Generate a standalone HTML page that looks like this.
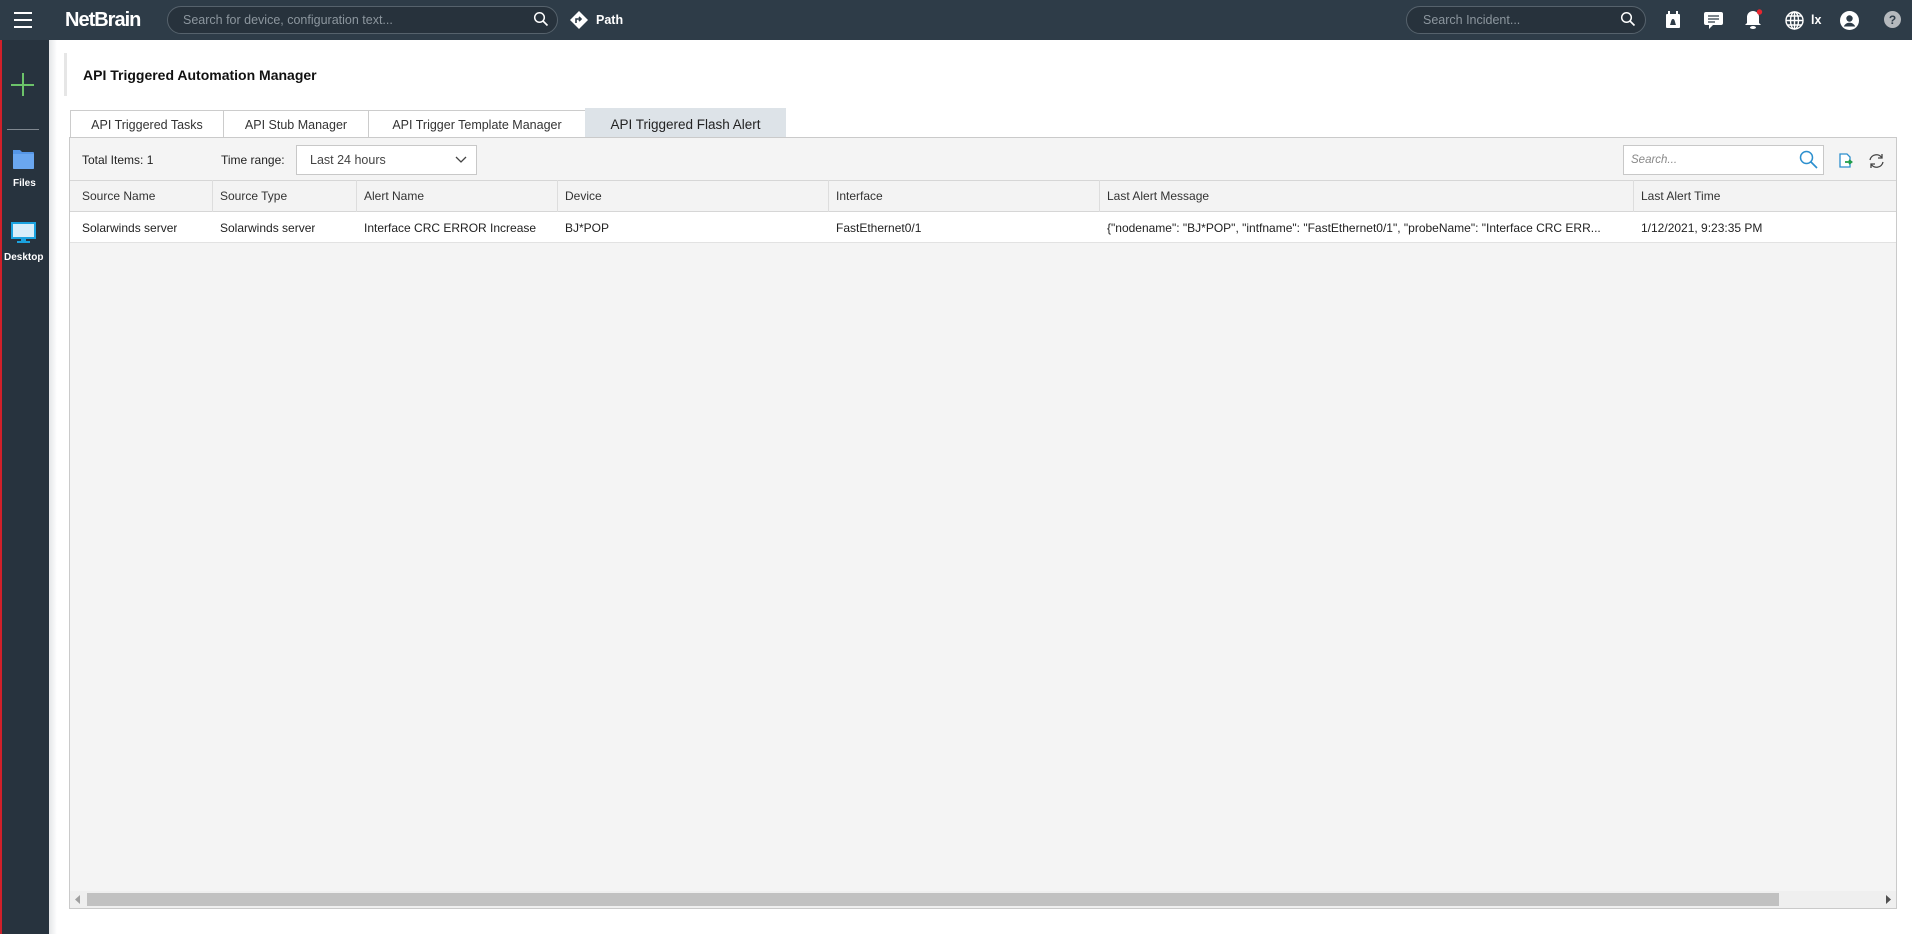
<!DOCTYPE html>
<html><head><meta charset="utf-8"><style>
*{box-sizing:border-box;margin:0;padding:0}
body{width:1912px;height:934px;overflow:hidden;background:#fff;font-family:"Liberation Sans",sans-serif;font-size:12px;color:#222;position:relative}
.abs{position:absolute}
#top{left:0;top:0;width:1912px;height:40px;background:#2e3c48}
#side{left:0;top:40px;width:49px;height:894px;background:#27333e;border-left:2px solid #d0202a}
.txt{white-space:nowrap}
.tab{top:110px;height:28px;border:1px solid #ccc;border-bottom:none;background:#fff;color:#333;font-size:12.5px;text-align:center;line-height:29px}
.hd{top:180px;height:32px;line-height:33px;padding-left:12px;border-right:1px solid #ddd;font-size:12px;color:#333}
.cell{top:212px;height:31px;line-height:33px;padding-left:12px;font-size:12px;color:#222;white-space:nowrap;overflow:hidden}
</style></head><body>
<div id="top" class="abs"></div>
<div class="abs" style="left:14px;top:12px;width:18px;height:2px;background:#fff"></div>
<div class="abs" style="left:14px;top:19px;width:18px;height:2px;background:#fff"></div>
<div class="abs" style="left:14px;top:26px;width:18px;height:2px;background:#fff"></div>
<div class="abs txt" style="left:65px;top:9px;color:#fff;font-size:20px;font-weight:bold;letter-spacing:-1px">NetBrain</div>
<div class="abs" style="left:167px;top:6px;width:391px;height:28px;border:1px solid #56626c;border-radius:14px;background:#27323c"></div>
<div class="abs txt" style="left:183px;top:13px;color:#8c969e;font-size:12.5px">Search for device, configuration text...</div>
<svg class="abs" style="left:533px;top:11px" width="16" height="16" viewBox="0 0 16 16"><circle cx="6.5" cy="6.5" r="4.8" fill="none" stroke="#fff" stroke-width="1.5"/><path d="M10 10l4.5 4.5" stroke="#fff" stroke-width="1.6"/></svg>
<svg class="abs" style="left:570px;top:11px" width="18" height="18" viewBox="0 0 18 18"><path d="M9 0L18 9 9 18 0 9z" fill="#fff"/><path d="M6 12V8h5M9 6l2 2-2 2" stroke="#2e3c48" stroke-width="1.6" fill="none"/></svg>
<div class="abs txt" style="left:596px;top:13px;color:#fff;font-size:12.5px;font-weight:bold">Path</div>
<div class="abs" style="left:1406px;top:6px;width:240px;height:28px;border:1px solid #56626c;border-radius:14px;background:#27323c"></div>
<div class="abs txt" style="left:1423px;top:13px;color:#8c969e;font-size:12.5px">Search Incident...</div>
<svg class="abs" style="left:1620px;top:11px" width="16" height="16" viewBox="0 0 16 16"><circle cx="6.5" cy="6.5" r="4.8" fill="none" stroke="#fff" stroke-width="1.5"/><path d="M10 10l4.5 4.5" stroke="#fff" stroke-width="1.6"/></svg>
<svg class="abs" style="left:1665px;top:11px" width="16" height="18" viewBox="0 0 16 18"><rect x="1" y="3" width="14" height="14" rx="1" fill="#fff"/><rect x="3" y="0" width="2" height="4" fill="#fff"/><rect x="11" y="0" width="2" height="4" fill="#fff"/><path d="M5 14c1-2 1-6 3-6s2 4 3 6z" fill="#2e3c48"/></svg>
<svg class="abs" style="left:1704px;top:11px" width="19" height="19" viewBox="0 0 19 19"><path d="M2 1h15a2 2 0 012 2v9a2 2 0 01-2 2H9l-4 4v-4H2a2 2 0 01-2-2V3a2 2 0 012-2z" fill="#fff"/><path d="M4 5h11M4 8h11M4 11h7" stroke="#2e3c48" stroke-width="1.3"/></svg>
<svg class="abs" style="left:1744px;top:9px" width="20" height="21" viewBox="0 0 20 21"><path d="M9 2a6 6 0 016 6v6l2 2H1l2-2V8a6 6 0 016-6z" fill="#fff"/><ellipse cx="9" cy="18.5" rx="3" ry="1.5" fill="#fff"/><circle cx="15.5" cy="3" r="2.7" fill="#e8262f"/></svg>
<svg class="abs" style="left:1785px;top:11px" width="19" height="19" viewBox="0 0 19 19" fill="none" stroke="#fff" stroke-width="1.4"><circle cx="9.5" cy="9.5" r="8.5"/><ellipse cx="9.5" cy="9.5" rx="4" ry="8.5"/><path d="M9.5 1v17M1 9.5h17M2.5 5h14M2.5 14h14"/></svg>
<div class="abs txt" style="left:1811px;top:13px;color:#fff;font-size:12.5px;font-weight:bold">lx</div>
<svg class="abs" style="left:1840px;top:11px" width="19" height="19" viewBox="0 0 19 19"><circle cx="9.5" cy="9.5" r="9.5" fill="#fff"/><circle cx="9.5" cy="7.5" r="3.2" fill="#2e3c48"/><path d="M3.8 15.5c1.5-3 3.5-3.7 5.7-3.7s4.2.7 5.7 3.7" fill="#2e3c48"/></svg>
<svg class="abs" style="left:1884px;top:11px" width="17" height="17" viewBox="0 0 17 17"><circle cx="8.5" cy="8.5" r="8.5" fill="#b5b9bd"/><text x="8.5" y="13" text-anchor="middle" font-family="Liberation Sans" font-weight="bold" font-size="12" fill="#2e3c48">?</text></svg>

<div id="side" class="abs"></div>
<div class="abs" style="left:11px;top:84px;width:23px;height:2px;background:#6cc36a"></div>
<div class="abs" style="left:22px;top:73px;width:2px;height:23px;background:#6cc36a"></div>
<div class="abs" style="left:7px;top:129px;width:32px;height:1px;background:#808890"></div>
<svg class="abs" style="left:12px;top:148px" width="23" height="22" viewBox="0 0 23 22"><path d="M1 2h7l2 2h11a1 1 0 011 1v15a1 1 0 01-1 1H2a1 1 0 01-1-1z" fill="#5596e6"/><path d="M1 6h21v14a1 1 0 01-1 1H2a1 1 0 01-1-1z" fill="#6aa7f0"/></svg>
<div class="abs txt" style="left:13px;top:178px;color:#fff;font-size:10px;font-weight:bold">Files</div>
<svg class="abs" style="left:11px;top:222px" width="25" height="22" viewBox="0 0 25 22"><rect x="1" y="1" width="23" height="15" fill="#d8eefa" stroke="#1ba3e0" stroke-width="2"/><rect x="10" y="16" width="5" height="3" fill="#1ba3e0"/><rect x="6" y="19" width="13" height="2" fill="#1ba3e0"/></svg>
<div class="abs txt" style="left:4px;top:252px;color:#fff;font-size:10px;font-weight:bold">Desktop</div>
<div class="abs" style="left:49px;top:40px;width:8px;height:894px;background:linear-gradient(to right,#e4e6e8,#fff)"></div>

<div class="abs" style="left:64px;top:53px;width:3px;height:43px;background:#e6e6e6"></div>
<div class="abs txt" style="left:83px;top:67px;font-size:14px;font-weight:bold;color:#111">API Triggered Automation Manager</div>

<div class="abs tab" style="left:70px;width:154px">API Triggered Tasks</div>
<div class="abs tab" style="left:223px;width:146px">API Stub Manager</div>
<div class="abs tab" style="left:368px;width:218px">API Trigger Template Manager</div>
<div class="abs tab" style="left:585px;top:108px;height:30px;width:201px;background:#dde3e8;border-color:#dde3e8;font-size:13.5px;color:#222;line-height:31px">API Triggered Flash Alert</div>

<div class="abs" style="left:69px;top:137px;width:1828px;height:772px;background:#f4f4f4;border:1px solid #cacaca"></div>
<div class="abs txt" style="left:82px;top:153px;font-size:12px">Total Items: 1</div>
<div class="abs txt" style="left:221px;top:153px;font-size:12px">Time range:</div>
<div class="abs" style="left:296px;top:145px;width:181px;height:30px;background:#fff;border:1px solid #c8c8c8"></div>
<div class="abs txt" style="left:310px;top:153px;font-size:12.5px;color:#444">Last 24 hours</div>
<svg class="abs" style="left:455px;top:156px" width="12" height="8" viewBox="0 0 12 8"><path d="M1 1l5 5 5-5" fill="none" stroke="#444" stroke-width="1.3"/></svg>
<div class="abs" style="left:1623px;top:145px;width:201px;height:30px;background:#fff;border:1px solid #c8c8c8"></div>
<div class="abs txt" style="left:1631px;top:154px;font-size:11.5px;color:#888;font-style:italic">Search...</div>
<svg class="abs" style="left:1799px;top:150px" width="19" height="19" viewBox="0 0 19 19"><circle cx="7.5" cy="7.5" r="6" fill="none" stroke="#2c8fce" stroke-width="1.5"/><path d="M12 12l6 6" stroke="#2c8fce" stroke-width="1.7"/></svg>
<svg class="abs" style="left:1839px;top:153px" width="14" height="15" viewBox="0 0 14 15"><path d="M1 1h7l3 3v10H1z" fill="#fff" stroke="#2c8fce" stroke-width="1.3"/><path d="M6 9h6M10 7l2.5 2-2.5 2" stroke="#1e9c4a" stroke-width="1.8" fill="none"/></svg>
<svg class="abs" style="left:1868px;top:153px" width="17" height="16" viewBox="0 0 17 16" fill="none" stroke="#444" stroke-width="1.3"><path d="M2 7a6.5 6.5 0 0112-2M15 9a6.5 6.5 0 01-12 2"/><path d="M14 1v4h-4M3 15v-4h4"/></svg>

<div class="abs" style="left:70px;top:180px;width:1826px;height:1px;background:#d6d6d6"></div>
<div class="abs" style="left:70px;top:181px;width:1826px;height:31px;background:#f3f3f3;border-bottom:1px solid #d6d6d6"></div>
<div class="abs hd" style="left:70px;width:143px">Source Name</div>
<div class="abs hd" style="left:208px;width:149px">Source Type</div>
<div class="abs hd" style="left:352px;width:206px">Alert Name</div>
<div class="abs hd" style="left:553px;width:276px">Device</div>
<div class="abs hd" style="left:824px;width:276px">Interface</div>
<div class="abs hd" style="left:1095px;width:539px">Last Alert Message</div>
<div class="abs hd" style="left:1629px;width:267px;border-right:none">Last Alert Time</div>

<div class="abs" style="left:70px;top:212px;width:1826px;height:31px;background:#fff;border-bottom:1px solid #e2e2e2"></div>
<div class="abs cell" style="left:70px">Solarwinds server</div>
<div class="abs cell" style="left:208px">Solarwinds server</div>
<div class="abs cell" style="left:352px">Interface CRC ERROR Increase</div>
<div class="abs cell" style="left:553px">BJ*POP</div>
<div class="abs cell" style="left:824px">FastEthernet0/1</div>
<div class="abs cell" style="left:1095px">{"nodename": "BJ*POP", "intfname": "FastEthernet0/1", "probeName": "Interface CRC ERR...</div>
<div class="abs cell" style="left:1629px">1/12/2021, 9:23:35 PM</div>

<div class="abs" style="left:70px;top:891px;width:1826px;height:17px;background:#efefef"></div>
<div class="abs" style="left:87px;top:893px;width:1692px;height:13px;background:#c1c1c1"></div>
<svg class="abs" style="left:75px;top:895px" width="6" height="9"><path d="M5 0v9L0 4.5z" fill="#a0a0a0"/></svg>
<svg class="abs" style="left:1886px;top:895px" width="6" height="9"><path d="M0 0v9l5-4.5z" fill="#505050"/></svg>
</body></html>
